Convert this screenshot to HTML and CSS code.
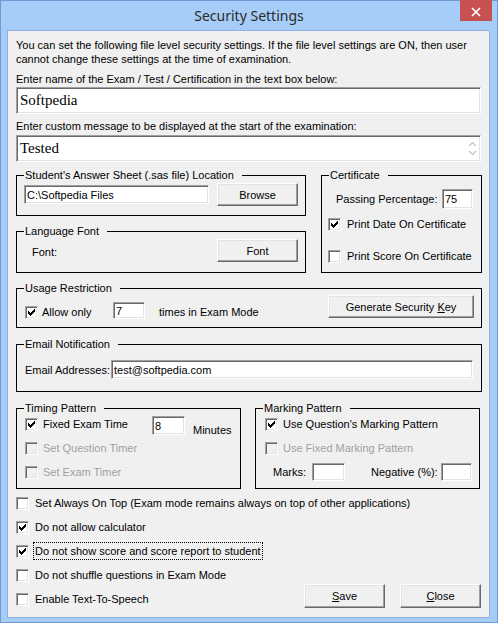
FILE: index.html
```html
<!DOCTYPE html>
<html>
<head>
<meta charset="utf-8">
<title>Security Settings</title>
<link rel="stylesheet" href="styles.css">
</head>
<body>
<div class="window">
  <div class="titlebar">
    <div class="title">Security Settings</div>
    <div class="close"><svg width="10" height="10" viewBox="0 0 10 10"><path d="M1 1L9 9M9 1L1 9" stroke="#fff" stroke-width="1.7" fill="none"/></svg></div>
  </div>
  <div class="client">
    <p class="intro">You can set the following file level security settings. If the file level settings are ON, then user<br>cannot change these settings at the time of examination.</p>
    <div class="label l1">Enter name of the Exam / Test / Certification in the text box below:</div>
    <div class="bigbox">Softpedia</div>
    <div class="label l2">Enter custom message to be displayed at the start of the examination:</div>
    <div class="bigbox memo"><span>Tested</span><svg class="spin" width="9" height="17" viewBox="0 0 9 17"><path d="M1 6L4.5 2.5L8 6M1 11L4.5 14.5L8 11" stroke="#c3c3c3" stroke-width="1.2" fill="none"/></svg></div>

    <div class="row-a">
      <div class="stack">
        <fieldset class="grp">
          <legend>Student's Answer Sheet (.sas file) Location</legend>
          <div class="body b-student">
            <div class="field f-path">C:\Softpedia Files</div>
            <div class="btn btn-browse"><span>Browse</span></div>
          </div>
        </fieldset>
        <fieldset class="grp">
          <legend>Language Font</legend>
          <div class="body b-lang">
            <span class="font-lbl">Font:</span>
            <div class="btn btn-font"><span>Font</span></div>
          </div>
        </fieldset>
      </div>
      <fieldset class="grp">
        <legend>Certificate</legend>
        <div class="body b-cert">
          <div class="cert-pass"><span class="pass-lbl">Passing Percentage:</span><div class="field f-pass">75</div></div>
          <div class="chk cert-date"><span class="cb"><svg width="11" height="11" viewBox="0 0 11 11" shape-rendering="crispEdges"><path d="M2 4h1v3h-1zM3 5h1v3h-1zM4 6h1v3h-1zM5 5h1v3h-1zM6 4h1v3h-1zM7 3h1v3h-1zM8 2h1v3h-1z" fill="#000"/></svg></span><span>Print Date On Certificate</span></div>
          <div class="chk cert-score"><span class="cb"></span><span>Print Score On Certificate</span></div>
        </div>
      </fieldset>
    </div>

    <fieldset class="grp g-usage">
      <legend>Usage Restriction</legend>
      <div class="body b-usage">
        <div class="chk allow"><span class="cb"><svg width="11" height="11" viewBox="0 0 11 11" shape-rendering="crispEdges"><path d="M2 4h1v3h-1zM3 5h1v3h-1zM4 6h1v3h-1zM5 5h1v3h-1zM6 4h1v3h-1zM7 3h1v3h-1zM8 2h1v3h-1z" fill="#000"/></svg></span><span>Allow only</span></div>
        <div class="field f-times">7</div>
        <span class="times-lbl">times in Exam Mode</span>
        <div class="btn btn-key"><span>Generate Security <u>K</u>ey</span></div>
      </div>
    </fieldset>

    <fieldset class="grp g-email">
      <legend>Email Notification</legend>
      <div class="body b-email">
        <span class="email-lbl">Email Addresses:</span>
        <div class="field f-email">test@softpedia.com</div>
      </div>
    </fieldset>

    <div class="row-c">
      <fieldset class="grp">
        <legend>Timing Pattern</legend>
        <div class="body b-rows b-timing">
          <div class="trow">
            <div class="chk w-fixed"><span class="cb"><svg width="11" height="11" viewBox="0 0 11 11" shape-rendering="crispEdges"><path d="M2 4h1v3h-1zM3 5h1v3h-1zM4 6h1v3h-1zM5 5h1v3h-1zM6 4h1v3h-1zM7 3h1v3h-1zM8 2h1v3h-1z" fill="#000"/></svg></span><span>Fixed Exam Time</span></div>
            <div class="field f-min">8</div>
            <span class="minutes">Minutes</span>
          </div>
          <div class="trow"><div class="chk dis"><span class="cb"></span><span>Set Question Timer</span></div></div>
          <div class="trow"><div class="chk dis"><span class="cb"></span><span>Set Exam Timer</span></div></div>
        </div>
      </fieldset>
      <fieldset class="grp">
        <legend>Marking Pattern</legend>
        <div class="body b-rows b-marking">
          <div class="trow"><div class="chk"><span class="cb"><svg width="11" height="11" viewBox="0 0 11 11" shape-rendering="crispEdges"><path d="M2 4h1v3h-1zM3 5h1v3h-1zM4 6h1v3h-1zM5 5h1v3h-1zM6 4h1v3h-1zM7 3h1v3h-1zM8 2h1v3h-1z" fill="#000"/></svg></span><span>Use Question's Marking Pattern</span></div></div>
          <div class="trow"><div class="chk dis"><span class="cb"></span><span>Use Fixed Marking Pattern</span></div></div>
          <div class="trow">
            <span class="marks-lbl">Marks:</span>
            <div class="field f-marks"></div>
            <span class="neg-lbl">Negative (%):</span>
            <div class="field f-neg"></div>
          </div>
        </div>
      </fieldset>
    </div>

    <div class="bottom">
      <div class="opts">
        <div class="opt chk"><span class="cb"></span><span>Set Always On Top (Exam mode remains always on top of other applications)</span></div>
        <div class="opt chk"><span class="cb"><svg width="11" height="11" viewBox="0 0 11 11" shape-rendering="crispEdges"><path d="M2 4h1v3h-1zM3 5h1v3h-1zM4 6h1v3h-1zM5 5h1v3h-1zM6 4h1v3h-1zM7 3h1v3h-1zM8 2h1v3h-1z" fill="#000"/></svg></span><span>Do not allow calculator</span></div>
        <div class="opt chk focus"><span class="cb"><svg width="11" height="11" viewBox="0 0 11 11" shape-rendering="crispEdges"><path d="M2 4h1v3h-1zM3 5h1v3h-1zM4 6h1v3h-1zM5 5h1v3h-1zM6 4h1v3h-1zM7 3h1v3h-1zM8 2h1v3h-1z" fill="#000"/></svg></span><span class="focus-txt">Do not show score and score report to student</span></div>
        <div class="opt chk"><span class="cb"></span><span>Do not shuffle questions in Exam Mode</span></div>
        <div class="opt chk"><span class="cb"></span><span>Enable Text-To-Speech</span></div>
      </div>
      <div class="actions">
        <div class="btn btn-act"><span><u>S</u>ave</span></div>
        <div class="btn btn-act"><span><u>C</u>lose</span></div>
      </div>
    </div>
  </div>
</div>
</body>
</html>
```
FILE: styles.css
```css
* { box-sizing: border-box; }
html, body { margin: 0; padding: 0; }
body {
  width: 498px; height: 623px; overflow: hidden;
  font-family: "Liberation Sans", Arial, sans-serif;
  font-size: 11px; color: #000;
  background: #a6cdf7;
}
.window {
  width: 498px; height: 623px;
  border: 1px solid #6f9bd4;
  background: #a6cdf7;
  display: flex; flex-direction: column;
}
.titlebar {
  height: 29px; flex: none;
  display: grid; grid-template-columns: 1fr auto 1fr;
}
.title {
  grid-column: 2;
  font-family: "Noto Sans", "Open Sans", sans-serif;
  font-size: 14px; line-height: 29px; color: #2b2b2b;
}
.close {
  grid-column: 3; justify-self: end;
  width: 32px; height: 21px; margin: -1px 5px 0 0;
  background: #c75050;
  display: flex; align-items: center; justify-content: center;
  padding-top: 2px;
}
.client {
  flex: none;
  height: 588px;
  margin: 0 7px 4px 6px;
  border: 1px solid #8db1e0;
  background: #f0f0f0;
  padding: 7px 7px 6px 8px;
}
.intro { margin: 0; line-height: 14px; }
.label { line-height: 14px; }
.l1 { margin-top: 6px; }
.l2 { margin-top: 5px; }

.bigbox, .field, .cb {
  border: 1px solid;
  border-color: #a0a0a0 #fff #fff #a0a0a0;
  box-shadow: inset 1px 1px #696969, inset -1px -1px #e3e3e3;
  background: #fff;
}
.bigbox {
  height: 27px; margin-top: 1px; margin-right: 1px;
  font-family: "Liberation Serif", "Times New Roman", serif;
  font-size: 15px;
  display: flex; align-items: center;
  padding-left: 3px;
}
.memo { margin-top: 2px; }
.spin { margin-left: auto; margin-right: 3px; }

.field {
  height: 20px; line-height: 14px;
  display: flex; align-items: center;
  padding-left: 2px;
}
.btn {
  height: 23px;
  display: flex; align-items: center; justify-content: center;
  background: #f0f0f0;
  border: 1px solid;
  border-color: #fff #696969 #696969 #fff;
  box-shadow: inset -1px -1px #a0a0a0, inset 1px 1px #e3e3e3;
  line-height: 14px;
}
.cb {
  width: 13px; height: 13px; flex: none;
  display: inline-block;
}
.cb svg { display: block; }
.chk { display: flex; align-items: center; gap: 5px; line-height: 14px; }
.chk.dis { color: #a0a0a0; }
.chk.dis .cb { background: #f0f0f0; }

fieldset.grp {
  margin: 0; padding: 0; min-width: 0;
  border: 1px solid #000;
}
fieldset.grp > legend {
  margin-left: 7px; padding: 0 8px 0 1px;
  line-height: 14px; height: 14px;
}

.row-a {
  margin-top: 6px;
  display: grid; grid-template-columns: 290px 161px; column-gap: 15px;
}
.stack { display: flex; flex-direction: column; gap: 8px; }
.b-student { display: flex; align-items: center; gap: 8px; padding: 1px 7px 9px 7px; }
.f-path { width: 185px; height: 19px; }
.btn-browse { width: 81px; }
.b-lang { display: flex; align-items: center; justify-content: space-between; padding: 1px 7px 10px 15px; }
.font-lbl { margin-top: 3px; }
.btn-font { width: 81px; }

.b-cert { padding: 7px 8px 9px 6px; }
.cert-pass { height: 20px; display: flex; align-items: center; }
.pass-lbl { margin-left: 8px; }
.f-pass { width: 31px; margin-left: auto; }
.cert-date { height: 14px; margin-top: 8px; gap: 6px; }
.cert-score { height: 14px; margin-top: 18px; gap: 6px; }

fieldset.g-usage { margin-top: 8px; }
.b-usage { display: flex; align-items: flex-end; padding: 0 7px 8px 8px; height: 32px; }
.allow { width: 88px; gap: 4px; height: 14px; }
.f-times { width: 32px; height: 17px; }
.times-lbl { margin-left: 14px; line-height: 14px; }
.btn-key { width: 146px; margin-left: auto; margin-bottom: 1px; }

fieldset.g-email { margin-top: 9px; }
.b-email { display: flex; align-items: center; padding: 9px 8px 12px 8px; }
.f-email { width: 362px; height: 19px; margin-left: auto; }

.row-c {
  margin-top: 9px;
  display: grid; grid-template-columns: 225px 225px; column-gap: 14px;
}
.b-rows { display: flex; flex-direction: column; gap: 6px; padding: 0 7px 7px 8px; }
.b-marking { padding-left: 9px; }
.trow { height: 18px; display: flex; align-items: center; }
.w-fixed { width: 127px; align-self: center; }
.f-min { width: 33px; height: 19px; align-self: flex-start; margin-top: 1px; }
.minutes { align-self: flex-start; margin-top: 8px; margin-left: 8px; line-height: 14px; }
.marks-lbl { margin-left: 8px; width: 39px; }
.f-marks { width: 33px; height: 18px; }
.neg-lbl { margin-left: 26px; }
.f-neg { width: 31px; height: 18px; margin-left: auto; }

.bottom { margin-top: 2px; display: grid; }
.opts, .actions { grid-area: 1 / 1; }
.opt { height: 24px; gap: 6px; }
.focus { gap: 4px; }
.focus-txt { outline: 1px dotted #000; padding: 1px; margin-left: 1px; line-height: 14px; }
.actions {
  align-self: end; justify-self: end;
  display: flex; gap: 15px;
  margin: 0 1px 3px 0;
}
.btn-act { width: 81px; height: 24px; }
```
